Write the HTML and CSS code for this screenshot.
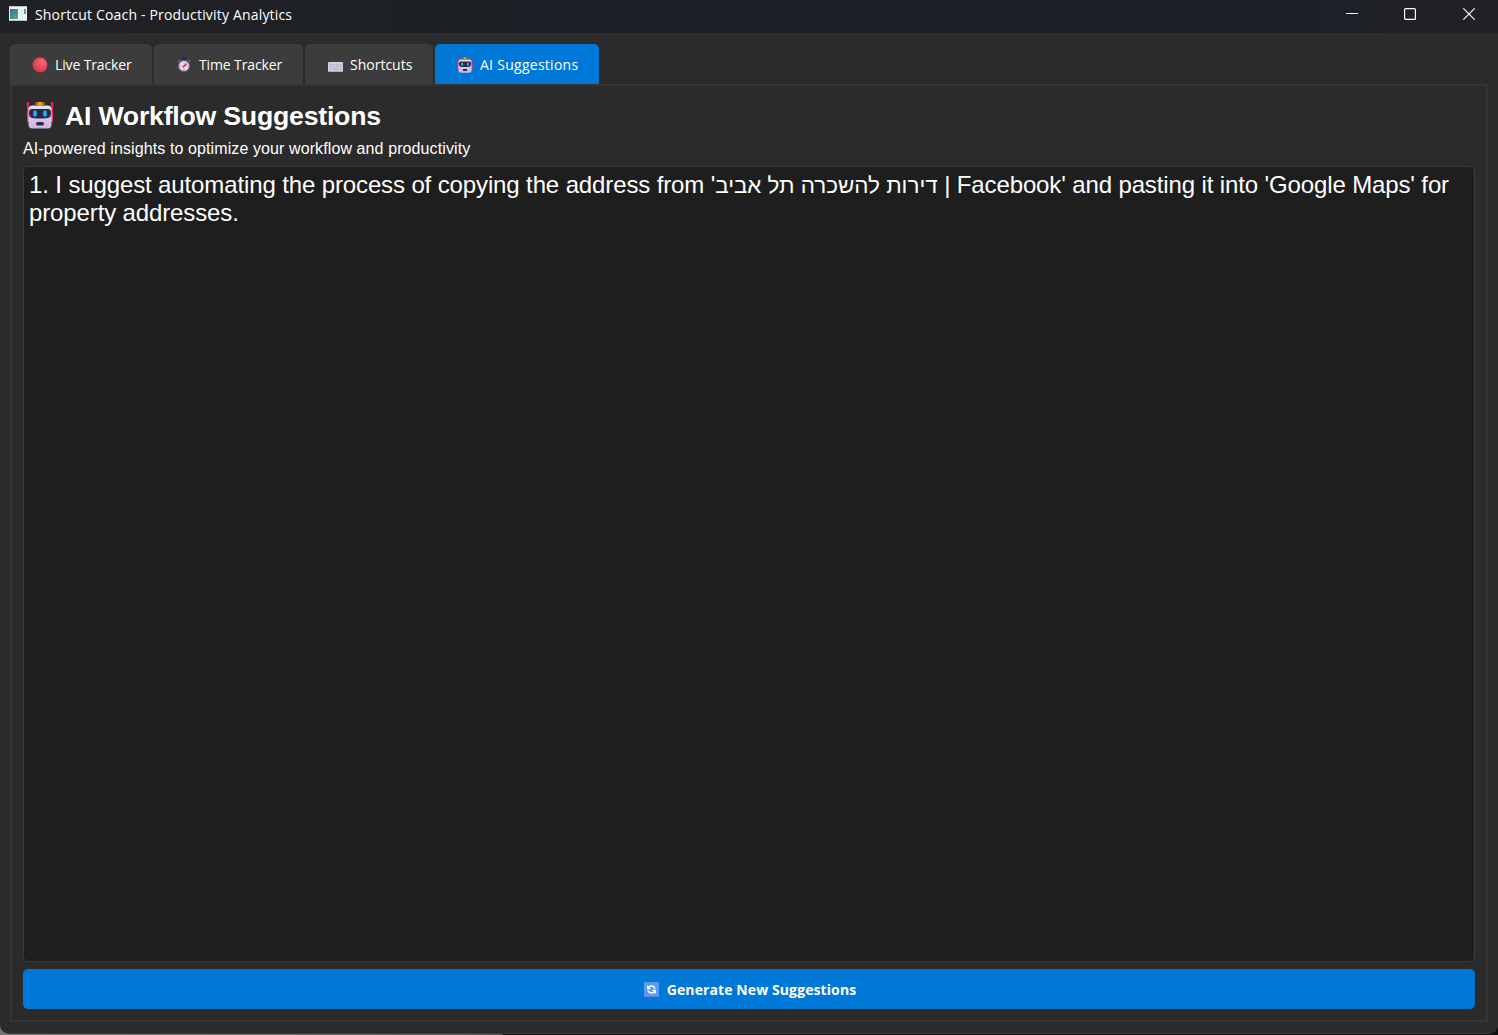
FILE: index.html
```html
<!DOCTYPE html>
<html lang="en">
<head>
<meta charset="utf-8">
<title>Shortcut Coach - Productivity Analytics</title>
<link rel="stylesheet" href="styles.css">
</head>
<body>
<svg width="0" height="0" class="defs">
  <defs>
    <linearGradient id="face" x1="0" y1="0" x2="0" y2="1"><stop offset="0" stop-color="#e9e2f0"/><stop offset="1" stop-color="#cdb2e2"/></linearGradient>
    <radialGradient id="red" cx=".65" cy=".3" r=".8"><stop offset="0" stop-color="#ff6478"/><stop offset="1" stop-color="#cf3048"/></radialGradient>
    <linearGradient id="app" x1="0" y1="0" x2="1" y2="1"><stop offset="0" stop-color="#3f6f9c"/><stop offset="1" stop-color="#58b071"/></linearGradient>
    <symbol id="robot" viewBox="0 0 28 28">
      <path d="M1 3h2v18H1zM25 3h2v18h-2z" fill="#e8255f"/>
      <circle cx="2" cy="2.5" r="1.5" fill="#e8255f"/><circle cx="26" cy="2.5" r="1.5" fill="#e8255f"/>
      <rect x="1" y="10" width="26" height="11" rx="2.5" fill="#ef3b70"/>
      <rect x="2.5" y="4.5" width="23" height="23" rx="4" fill="url(#face)"/>
      <rect x="9" y="1" width="10" height="4" rx="1.5" fill="#a96c13"/>
      <rect x="12" y="1" width="4" height="4" rx="1" fill="#e0a325"/>
      <path d="M6 8h16q3 0 3 4t-3 5q-8 1-16 0-3-1-3-5t3-4z" fill="#2d2748"/>
      <ellipse cx="9" cy="12.5" rx="1.9" ry="3.2" fill="#1cadf4"/><ellipse cx="19" cy="12.5" rx="1.9" ry="3.2" fill="#1cadf4"/>
      <rect x="10" y="21" width="8" height="3.5" rx="1.7" fill="#342649"/>
    </symbol>
  </defs>
</svg>
<div class="window">
  <header class="titlebar">
    <svg class="app-icon" viewBox="0 0 18 15"><path fill="#f3f3f3" d="M0 0h18v15H0z"/><path fill="#b9c0c4" d="M0 0h18v1H0zM0 14h18v1H0z"/><path fill="url(#app)" d="M1 3h8v10H1z"/><path fill="#e6eaeb" d="M11 3h3v10h-3z"/><path fill="#55a485" d="M15 3h2v5h-2z"/></svg>
    <span class="title">Shortcut Coach - Productivity Analytics</span>
    <div class="controls">
      <svg viewBox="0 0 12 12"><path d="M0 5.5h12" stroke="#fff"/></svg>
      <svg viewBox="0 0 12 12"><rect x=".6" y=".6" width="10.8" height="10.8" rx="1" fill="none" stroke="#fff" stroke-width="1.2"/></svg>
      <svg viewBox="0 0 12 12"><path d="M.3.3l11.4 11.4M11.7.3L.3 11.7" stroke="#fff" stroke-width="1.1"/></svg>
    </div>
  </header>
  <main class="content">
    <nav class="tabs">
      <div class="tab live"><svg viewBox="0 0 15 15"><circle cx="7.5" cy="7.5" r="7" fill="url(#red)"/></svg><span>Live Tracker</span></div>
      <div class="tab time"><svg viewBox="0 0 15 15"><path d="M5.5 0h4v3h-4z" fill="#352752"/><path d="M2 3l2 2M13 3l-2 2" stroke="#665679" stroke-width="2"/><circle cx="7.5" cy="8.5" r="5.3" fill="#e6dced" stroke="#665083" stroke-width="1.2"/><path d="M6.4 9.7l3.5-3.5" stroke="#e5264d" stroke-width="1.5"/><path d="M7.5 4.5v1M7.5 11.5v1M3.5 8.5h1M10.5 8.5h1" stroke="#8a7a9c"/></svg><span>Time Tracker</span></div>
      <div class="tab keys"><svg viewBox="0 0 16 16"><rect x="1" y="5" width="15" height="10" rx="1" fill="#d4cddd"/><path d="M2.5 7.5h12M2.5 9.5h12" stroke="#b3abbd" stroke-dasharray="1.5 .6"/><path d="M2.5 12h2M5.5 12h6M12.5 12h2" stroke="#a8a0b3"/><path d="M1 14.5h15" stroke="#b6a7c5"/></svg><span>Shortcuts</span></div>
      <div class="tab ai"><svg><use href="#robot"/></svg><span>AI Suggestions</span></div>
    </nav>
    <section class="pane">
      <h1><svg><use href="#robot"/></svg><span>AI Workflow Suggestions</span></h1>
      <p class="subtitle">AI-powered insights to optimize your workflow and productivity</p>
      <div class="output">1. I suggest automating the process of copying the address from '<span class="hebrew">דירות להשכרה תל אביב</span> | Facebook' and pasting it into 'Google Maps' for property addresses.</div>
      <button class="generate"><svg viewBox="0 0 15 15"><rect width="15" height="15" rx="1" fill="#569bf3"/><path d="M0 14.5h15" stroke="#7180e8"/><path d="M4 6.5Q5 4 7.5 4T11 6.5M11 8.5Q10 11 7.5 11T4 8.5" fill="none" stroke="#fff" stroke-width="1.6"/><path d="M3 3v4.2h4zM12 12V7.8H8z" fill="#fff"/></svg><span>Generate New Suggestions</span></button>
    </section>
  </main>
</div>
</body>
</html>
```
FILE: styles.css
```css
* { box-sizing: border-box; }
body {
  margin: 0;
  height: 1035px;
  overflow: hidden;
  background: linear-gradient(90deg, #777 0, #666 450px, #555 502px, #100c10 503px);
  font-family: "Open Sans", "Noto Sans", sans-serif;
  color: #fff;
}
.defs { display: block; position: absolute; }
svg { display: block; flex: none; }
.window {
  display: flex;
  flex-direction: column;
  height: 1034px;
  background: #2b2b2b;
  border-bottom: 1px solid #3b3b3b;
  border-radius: 0 0 9px 9px;
  overflow: hidden;
}
.titlebar {
  display: flex;
  align-items: center;
  height: 33px;
  padding: 0 23px 4px 9px;
  background: linear-gradient(90deg, #202124 0, #1c2026 35%, #1c202a 88%, #202124 94%);
}
.app-icon { width: 18px; height: 15px; margin: 0 8px 2px 0; }
.title { font-size: 14px; line-height: 20px; letter-spacing: 0.18px; white-space: nowrap; }
.controls { display: flex; gap: 46px; margin: 0 0 1px auto; }
.controls svg { width: 12px; height: 12px; }
.controls svg:last-child { margin-left: 1px; }
.content { display: flex; flex-direction: column; flex: 1; padding: 11px 10px; }
.tabs { display: flex; gap: 2px; height: 40px; }
.tab {
  display: flex;
  align-items: center;
  padding: 1px 0 0 22px;
  background: #3c3c3c;
  border-radius: 5px 5px 0 0;
  font-size: 14px;
  letter-spacing: -0.13px;
  white-space: nowrap;
}
.tab svg { width: 16px; height: 16px; margin-right: 7px; }
.live { width: 142px; }
.time { width: 149px; }
.keys { width: 128px; letter-spacing: 0; }
.ai { width: 164px; background: #0078d7; letter-spacing: 0.27px; }
.pane {
  display: flex;
  flex-direction: column;
  height: 938px;
  padding: 11px;
  border: 2px solid #353535;
}
h1 {
  display: flex;
  align-items: center;
  height: 38px;
  margin: 0;
  font: bold 26.67px/38px "Liberation Sans", Arial, sans-serif;
  letter-spacing: -0.22px;
}
h1 svg { width: 28px; height: 28px; margin: 0 11px 2px 3px; }
.subtitle {
  height: 31px;
  margin: 0;
  font: 16px/28px "Liberation Sans", Arial, sans-serif;
  letter-spacing: 0.1px;
}
.output {
  height: 796px;
  padding: 4px 5px;
  background: #1e1e1e;
  border: 1px solid #3a3a3a;
  border-radius: 5px;
  font: 24px/28px "Liberation Sans", Arial, sans-serif;
  letter-spacing: -0.125px;
}
.hebrew { font-size: 22.4px; letter-spacing: 0; line-height: 1; }
.generate {
  display: flex;
  align-items: center;
  justify-content: center;
  height: 40px;
  margin: 7px 0 0;
  padding: 0 0 0 2px;
  border: 0;
  border-radius: 5px;
  background: #0078d7;
  color: #fff;
  font: bold 14px "Open Sans", "Noto Sans", sans-serif;
  letter-spacing: 0.1px;
}
.generate svg { width: 15px; height: 15px; margin-right: 8px; }
```
